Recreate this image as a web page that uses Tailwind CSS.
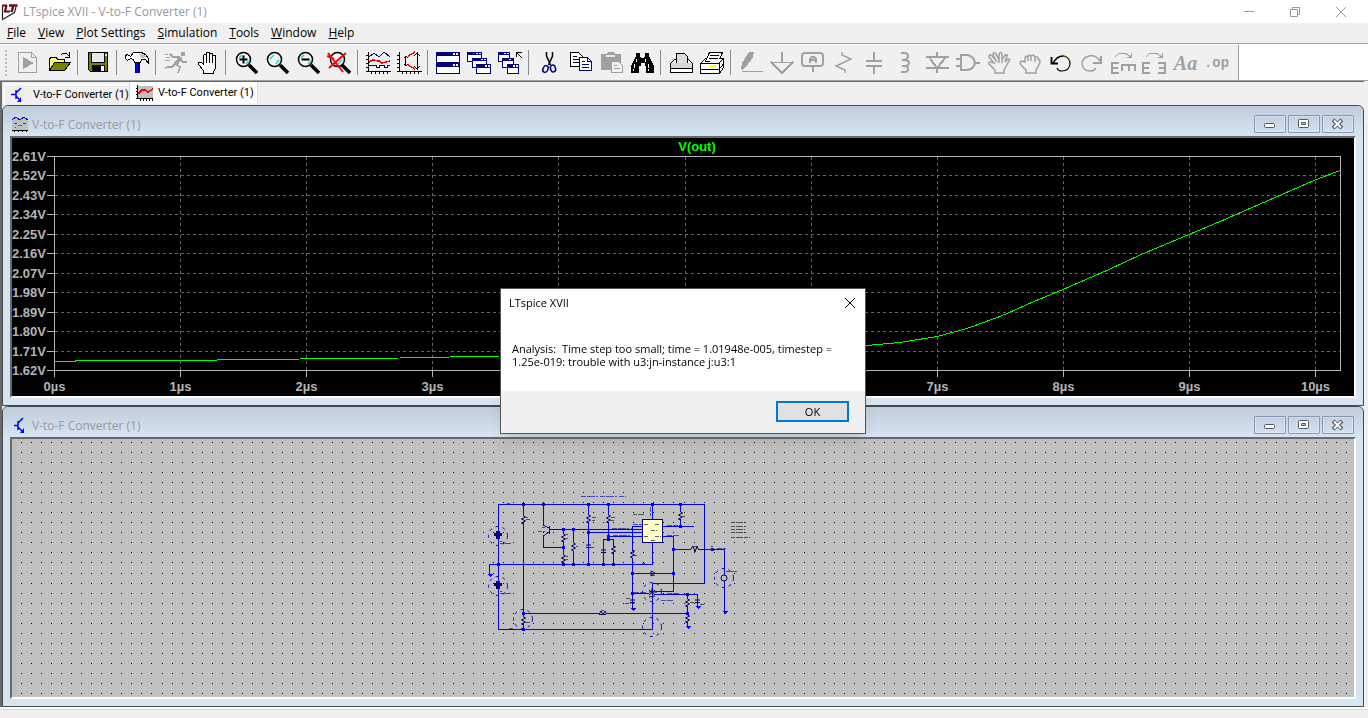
<!DOCTYPE html>
<html lang="en">
  <head>
    <meta charset="UTF-8" />
    <meta name="viewport" content="width=device-width, initial-scale=1.0" />
    <title>LTspice XVII - V-to-F Converter (1)</title>
    <script src="https://cdn.jsdelivr.net/npm/@tailwindcss/browser@4"></script>
  </head>
  <body class="min-h-screen flex flex-col bg-[#f0f0f0] font-['Open_Sans','Noto_Sans',sans-serif] text-xs text-black overflow-hidden">
    <!-- Title bar -->
    <header class="flex items-center h-[23px] bg-white text-[#999]">
      <svg class="w-[18px] h-[18px] ml-[1px]" viewBox="0 0 18 18" fill="none">
        <path d="M1.500 3v13.500L13.500 9.500 15 4" stroke="#222" stroke-width="1.200" />
        <path d="M1 2.500h5M5.500 2L4 8.500h5" stroke="#6b0d14" stroke-width="2.200" />
        <path d="M8 2.500h8.500M12.500 2l-2 7" stroke="#6b0d14" stroke-width="2.500" />
      </svg>
      <h1 class="ml-1">LTspice XVII - V-to-F Converter (1)</h1>
      <div class="ml-auto mr-[4px] flex">
        <button aria-label="Minimize" class="w-[46px] h-[22px] flex items-center justify-center">
          <svg class="w-3 h-3" viewBox="0 0 12 12" stroke="#999"><path d="M1 5.500h10" /></svg>
        </button>
        <button aria-label="Restore" class="w-[46px] h-[22px] flex items-center justify-center">
          <svg class="w-3 h-3" viewBox="0 0 12 12" stroke="#999" fill="none"><path d="M1.500 3.500h7v7h-7zM3.500 3.500v-2h7v7h-2" /></svg>
        </button>
        <button aria-label="Close" class="w-[46px] h-[22px] flex items-center justify-center">
          <svg class="w-3 h-3" viewBox="0 0 12 12" stroke="#999"><path d="M1 1l10 10M11 1L1 11" /></svg>
        </button>
      </div>
    </header>

    <!-- Menu -->
    <nav class="flex items-center h-[21px] pl-[1px] border-b border-[#a0a0a0]">
      <button class="px-[6px]"><u>F</u>ile</button>
      <button class="px-[6px]"><u>V</u>iew</button>
      <button class="px-[6px]"><u>P</u>lot Settings</button>
      <button class="px-[6px]"><u>S</u>imulation</button>
      <button class="px-[6px]"><u>T</u>ools</button>
      <button class="px-[6px]"><u>W</u>indow</button>
      <button class="px-[6px]"><u>H</u>elp</button>
    </nav>

    <!-- Toolbar -->
    <div class="bg-white border-b border-[#a0a0a0] pt-[1px]">
      <div id="toolbar" class="flex items-center w-max h-[35px] bg-[#f0f0f0] pl-[5px] pr-[6px] border-r border-[#a0a0a0]">
        <div class="w-[2px] h-[26px] mr-[6px] border-l-2 border-dotted border-[#bbb]"></div>
        <button aria-label="Run" class="w-[31px] h-[30px] flex items-center justify-center">
          <svg class="w-[25px] h-6" viewBox="0 0 25 24" fill="none" stroke="#a0a0a0" shape-rendering="crispEdges"><path d="M2.500 1.500h13l5 5v15h-18zM15.500 1.500v5h5" /><path d="M7 6v12l11-6z" fill="#a0a0a0" stroke="none" /></svg>
        </button>
        <button aria-label="Open" class="w-[31px] h-[30px] flex items-center justify-center">
          <svg class="w-[25px] h-6" viewBox="0 0 25 24" fill="none" stroke="#000" shape-rendering="crispEdges"><path d="M2.500 19V8l2-2h4l2 2h7v4" fill="#ffff80" /><path d="M2.500 19.500l5-8h16l-6 8z" fill="#808000" /><path d="M14 4l2-2h3l3 3M22.500 1v5h-5" /></svg>
        </button>
        <div class="w-2 h-[25px] pl-[2px]"><div class="w-px h-full bg-[#8c8c8c]"></div></div>
        <button aria-label="Save" class="w-[31px] h-[30px] flex items-center justify-center">
          <svg class="w-[25px] h-6" viewBox="0 0 25 24" shape-rendering="crispEdges"><path d="M2 1h20v20H4l-2-2z" fill="#000" /><path d="M3 2h18v18H4l-1-1z" fill="#808000" /><path d="M5 1h14v11H5z" fill="#000" /><path d="M6 2h12v9H6z" fill="#e8e8e8" /><path d="M6 14h13v7H6z" fill="#000" /><path d="M15 15h3v5h-3z" fill="#fff" /><path d="M19 3h2v2h-2z" fill="#ddd" /></svg>
        </button>
        <div class="w-2 h-[25px] pl-[2px]"><div class="w-px h-full bg-[#8c8c8c]"></div></div>
        <button aria-label="Control panel" class="w-[31px] h-[30px] flex items-center justify-center">
          <svg class="w-[25px] h-6" viewBox="0 0 25 24" shape-rendering="crispEdges"><path d="M10 9h5v13h-5z" fill="#000080" /><path d="M11 10h2v12h-2z" fill="#0000ff" /><path d="M.5 4.500l2-1 3 2 3-4h8l4 2 3 4v5l-3-4h-4l-1 3h-6l-1-3-3-1-3 2-2-2z" fill="#fff" stroke="#000" /><path d="M14 3h4l3 3-5 1z" fill="#c0c0c0" /></svg>
        </button>
        <div class="w-2 h-[25px] pl-[2px]"><div class="w-px h-full bg-[#8c8c8c]"></div></div>
        <button aria-label="Halt" class="w-[31px] h-[30px] flex items-center justify-center">
          <svg class="w-[25px] h-6" viewBox="0 0 25 24" fill="none" stroke="#a0a0a0" stroke-width="2" shape-rendering="crispEdges"><path d="M17 1h4v4h-4z" fill="#a0a0a0" stroke="none" /><path d="M17 6L11 14" stroke-width="4" /><path d="M15 6H9L6 3M16 8l3 3h4M11 13l-3 3H4l-3 1M12 13l4 3-2 6" stroke-width="1.500" /><path d="M1 3.500h3M2 6.500h4M1 9.500h5" stroke-width="1" /></svg>
        </button>
        <button aria-label="Pan" class="w-[31px] h-[30px] flex items-center justify-center">
          <svg class="w-[25px] h-6" viewBox="0 0 25 24" fill="#fff" stroke="#000" shape-rendering="crispEdges"><path d="M8.500 22.500v-3l-5-6v-2h3l2 2V4.500l1-1h2v-2h3v1h3v2h3v13l-2 3v2z" /><path d="M11.500 4v8M14.500 3v9M17.500 4v8" /></svg>
        </button>
        <div class="w-2 h-[25px] pl-[2px]"><div class="w-px h-full bg-[#8c8c8c]"></div></div>
        <button aria-label="Zoom in" class="w-[31px] h-[30px] flex items-center justify-center">
          <svg class="w-[25px] h-6" viewBox="0 0 25 24" fill="none" stroke="#000"><circle cx="9.500" cy="8.500" r="7" fill="#f4f4f4" stroke-width="1.500" /><path d="M5 7l3-3M12 13l3-3" stroke="#00e0e0" stroke-width="1.500" /><path d="M5.500 8.500h8M9.500 4.500v8" stroke-width="2" /><path d="M15 14l8 8" stroke-width="3.500" /></svg>
        </button>
        <button aria-label="Zoom" class="w-[31px] h-[30px] flex items-center justify-center">
          <svg class="w-[25px] h-6" viewBox="0 0 25 24" fill="none" stroke="#000"><circle cx="9.500" cy="8.500" r="7" fill="#f4f4f4" stroke-width="1.500" /><path d="M5 8l4-4M11 13l3-4" stroke="#00e0e0" stroke-width="1.500" /><path d="M15 14l8 8" stroke-width="3.500" /></svg>
        </button>
        <button aria-label="Zoom out" class="w-[31px] h-[30px] flex items-center justify-center">
          <svg class="w-[25px] h-6" viewBox="0 0 25 24" fill="none" stroke="#000"><circle cx="9.500" cy="8.500" r="7" fill="#f4f4f4" stroke-width="1.500" /><path d="M5 7l3-3M12 13l3-3" stroke="#00e0e0" stroke-width="1.500" /><path d="M5.500 8.500h8" stroke-width="2" /><path d="M15 14l8 8" stroke-width="3.500" /></svg>
        </button>
        <button aria-label="Zoom full extents" class="w-[31px] h-[30px] flex items-center justify-center">
          <svg class="w-[25px] h-6" viewBox="0 0 25 24" fill="none" stroke="#000"><circle cx="10.500" cy="8.500" r="7" fill="#f4f4f4" stroke-width="1.500" /><path d="M11 13l4-4" stroke="#00e0e0" stroke-width="1.500" /><path d="M15 14l8 8" stroke-width="3.500" /><path d="M1 2l15 19M19 2L2 17M0 5l7 3" stroke="#f00" stroke-width="2" /></svg>
        </button>
        <div class="w-2 h-[25px] pl-[2px]"><div class="w-px h-full bg-[#8c8c8c]"></div></div>
        <button aria-label="Autorange" class="w-[31px] h-[30px] flex items-center justify-center">
          <svg class="w-[25px] h-6" viewBox="0 0 25 24" fill="none" stroke="#000" shape-rendering="crispEdges"><path d="M2.500 1v20M0 20.500h25M0 4.500h2M0 8.500h2M0 12.500h2M0 16.500h2M5.500 20v3M9.500 20v3M13.500 20v3M17.500 20v3M21.500 20v3" /><path d="M3 6l5-4 5 4 5-5 6 5" stroke="#000080" /><path d="M3 11l4-2 6 1 3 2 4-1 4-1" stroke="#f00" stroke-width="1.500" /><path d="M3 14.500h7v2h3v-2h5v2h3v-2h3" stroke="#000080" /></svg>
        </button>
        <button aria-label="Reset axes" class="w-[31px] h-[30px] flex items-center justify-center">
          <svg class="w-[25px] h-6" viewBox="0 0 25 24" fill="none" stroke="#000" shape-rendering="crispEdges"><path d="M2.500 1v20M0 20.500h25M0 4.500h2M0 8.500h2M0 12.500h2M0 16.500h2M5.500 20v3M9.500 20v3M13.500 20v3M17.500 20v3M21.500 20v3M8.500 5v9M7 7l2-2 2 2M7 13l2 2 2-2M20.500 1v18M17 5l3-3 3 3M17 15l3 3 3-3" /><path d="M18 1l-7 4M11 14l7 4" stroke="#f00" stroke-width="1.500" /></svg>
        </button>
        <div class="w-2 h-[25px] pl-[2px]"><div class="w-px h-full bg-[#8c8c8c]"></div></div>
        <button aria-label="Tile windows" class="w-[31px] h-[30px] flex items-center justify-center">
          <svg class="w-[25px] h-6" viewBox="0 0 25 24" fill="#fff" stroke="#000080" shape-rendering="crispEdges"><path d="M.5 1.500h23v10H.5zM.5 12.500h23v10H.5z" /><path d="M0 1h24v4H0zM0 12h24v4H0z" fill="#000080" stroke="none" /><path d="M17 2h2v2h-2zM20 2h2v2h-2zM17 13h2v2h-2zM20 13h2v2h-2z" stroke="none" /></svg>
        </button>
        <button aria-label="Cascade windows" class="w-[31px] h-[30px] flex items-center justify-center">
          <svg class="w-[25px] h-6" viewBox="0 0 25 24" fill="#fff" stroke="#000080" shape-rendering="crispEdges"><path d="M.5 1.500h14v9H.5z" /><path d="M0 1h15v3H0z" fill="#000080" stroke="none" /><path d="M5.500 7.500h14v9h-14z" /><path d="M5 7h15v3H5z" fill="#000080" stroke="none" /><path d="M9.500 13.500h14v9h-14z" /><path d="M9 13h15v4H9z" fill="#000080" stroke="none" /><path d="M9 2h2v1H9zM12 2h2v1h-2zM14 8h2v1h-2zM17 8h2v1h-2zM18 14h2v2h-2zM21 14h2v2h-2z" stroke="none" /></svg>
        </button>
        <button aria-label="Close all" class="w-[31px] h-[30px] flex items-center justify-center">
          <svg class="w-[25px] h-6" viewBox="0 0 25 24" fill="#fff" stroke="#000080" shape-rendering="crispEdges"><path d="M.5 1.500h11v9H.5z" /><path d="M0 1h12v3H0z" fill="#000080" stroke="none" /><path d="M4.500 7.500h11v9h-11z" /><path d="M4 7h12v3H4z" fill="#000080" stroke="none" /><path d="M9.500 13.500h11v9h-11z" /><path d="M9 13h12v4H9z" fill="#000080" stroke="none" /><path d="M6 2h2v1H6zM9 2h2v1H9zM11 8h2v1h-2zM15 14h2v2h-2zM18 14h2v2h-2z" stroke="none" /><path d="M18.500 6V1.500H24M19 2l5 5" fill="none" stroke="#000" /></svg>
        </button>
        <div class="w-2 h-[25px] pl-[2px]"><div class="w-px h-full bg-[#8c8c8c]"></div></div>
        <button aria-label="Cut" class="w-[31px] h-[30px] flex items-center justify-center">
          <svg class="w-[25px] h-6" viewBox="0 0 25 24" fill="none" stroke="#000"><path d="M9.500 1v4l4 9M15.500 1v4l-4 9" stroke-width="1.500" /><g stroke="#000080" stroke-width="1.500"><ellipse cx="8.500" cy="18" rx="2.500" ry="3.500" transform="rotate(25 8.500 18)" /><ellipse cx="16" cy="17.500" rx="2.500" ry="3.500" transform="rotate(-15 16 17.500)" /></g></svg>
        </button>
        <button aria-label="Copy" class="w-[31px] h-[30px] flex items-center justify-center">
          <svg class="w-[25px] h-6" viewBox="0 0 25 24" fill="#fff" stroke="#000" shape-rendering="crispEdges"><path d="M2.500 1.500h8l4 4v10h-12zM5 5.500h4M5 8.500h7M5 11.500h7" /><path d="M11.500 6.500h8l4 4v9h-12zM19.500 6.500v4h4M14 10.500h3M14 13.500h7M14 16.500h7" stroke="#000080" /></svg>
        </button>
        <button aria-label="Paste" class="w-[31px] h-[30px] flex items-center justify-center">
          <svg class="w-[25px] h-6" viewBox="0 0 25 24" fill="#a0a0a0" shape-rendering="crispEdges"><path d="M2 3h5l2-2h5l2 2h6v16H2z" /><path d="M7 4h9v2H7z" fill="#e8e8e8" /><path d="M12.500 10.500h7l4 4v7h-11zM15 14.500h3M15 17.500h6" fill="#f0f0f0" stroke="#a0a0a0" /></svg>
        </button>
        <button aria-label="Find" class="w-[31px] h-[30px] flex items-center justify-center">
          <svg class="w-[25px] h-6" viewBox="0 0 25 24" shape-rendering="crispEdges"><path d="M6 2h4v3l1 2h3l1-2V2h4v3l2 4 3 6v7h-8v-7h-1v-3h-4v3H9v7H1v-7l3-6 2-4z" fill="#000" /><path d="M6 8h1v3H6zM15 8h1v3h-1zM4 13h1v4H4zM18 13h1v4h-1zM3 18h1v2H3zM18 18h1v2h-1z" fill="#fff" /></svg>
        </button>
        <div class="w-2 h-[25px] pl-[2px]"><div class="w-px h-full bg-[#8c8c8c]"></div></div>
        <button aria-label="Print" class="w-[31px] h-[30px] flex items-center justify-center">
          <svg class="w-[25px] h-6" viewBox="0 0 25 24" fill="#fff" stroke="#000" shape-rendering="crispEdges"><path d="M1.500 12.500l4-4h14l4 4v9h-22z" /><path d="M7.500 12V2.500h8l3 3V12" fill="#ddd" /><path d="M2 12h21v5H2z" fill="#d8d8d8" stroke="none" /><path d="M2 17.500h21" /></svg>
        </button>
        <button aria-label="Print setup" class="w-[31px] h-[30px] flex items-center justify-center">
          <svg class="w-[25px] h-6" viewBox="0 0 25 24" fill="#fff" stroke="#000" shape-rendering="crispEdges"><path d="M.5 12.500l5-5h18v9l-4 6H.500z" /><path d="M5.500 10.500l4-9h13l-4 9zM10 4.500h9M9 7.500h9" /><path d="M1 12.500h18l4-5M19.500 12v10M1 18.500h18l4-5" /><path d="M10 14h6v2h-6z" fill="#ff0" stroke="none" /></svg>
        </button>
        <div class="w-2 h-[25px] pl-[2px]"><div class="w-px h-full bg-[#8c8c8c]"></div></div>
        <button aria-label="Wire" class="w-[31px] h-[30px] flex items-center justify-center">
          <svg class="w-[25px] h-6" viewBox="0 0 25 24" fill="#a0a0a0" shape-rendering="crispEdges"><path d="M10 1h5l-1 5-7 10-4 3-1-1 1-6z" /><path d="M3 20h21v1H3z" /></svg>
        </button>
        <button aria-label="Ground" class="w-[31px] h-[30px] flex items-center justify-center">
          <svg class="w-[25px] h-6" viewBox="0 0 25 24" fill="none" stroke="#a0a0a0" stroke-width="2" shape-rendering="crispEdges"><path d="M12 1v10" /><path d="M0 11.500h24M1 11l11 11 11-11" stroke-width="1.500" /></svg>
        </button>
        <button aria-label="Label net" class="w-[31px] h-[30px] flex items-center justify-center">
          <svg class="w-[25px] h-6" viewBox="0 0 25 24" fill="none" stroke="#a0a0a0" stroke-width="2"><rect x="1" y="2" width="21" height="13" rx="3" /><path d="M12 15v6M9 12V8l2-2h2l2 2v4M9 9h6" /></svg>
        </button>
        <button aria-label="Resistor" class="w-[31px] h-[30px] flex items-center justify-center">
          <svg class="w-[25px] h-6" viewBox="0 0 25 24" fill="none" stroke="#a0a0a0" stroke-width="1.500"><path d="M10 1v3l9 4L4 15l9 4v3" /></svg>
        </button>
        <button aria-label="Capacitor" class="w-[31px] h-[30px] flex items-center justify-center">
          <svg class="w-[25px] h-6" viewBox="0 0 25 24" fill="none" stroke="#a0a0a0" stroke-width="2" shape-rendering="crispEdges"><path d="M11 1v8M11 15v8" /><path d="M3 10h16M3 15h16" stroke-width="2" /></svg>
        </button>
        <button aria-label="Inductor" class="w-[31px] h-[30px] flex items-center justify-center">
          <svg class="w-[25px] h-6" viewBox="0 0 25 24" fill="none" stroke="#a0a0a0" stroke-width="2"><path d="M7 2h3q4 0 4 3t-4 4H8M10 9q5 0 5 3t-5 3H8M10 15q4 0 4 3t-4 3H7" /></svg>
        </button>
        <button aria-label="Diode" class="w-[31px] h-[30px] flex items-center justify-center">
          <svg class="w-[25px] h-6" viewBox="0 0 25 24" fill="none" stroke="#a0a0a0" stroke-width="2" shape-rendering="crispEdges"><path d="M12 1v5M12 17v5M1 6h23M1 17h23" /><path d="M4 6l8 11 9-11" /></svg>
        </button>
        <button aria-label="Component" class="w-[31px] h-[30px] flex items-center justify-center">
          <svg class="w-[25px] h-6" viewBox="0 0 25 24" fill="none" stroke="#a0a0a0" stroke-width="2"><path d="M5 4h6q7 1 8 8-1 6-8 7H5zM0 8h5M0 15h5M19 12h5" /></svg>
        </button>
        <button aria-label="Move" class="w-[31px] h-[30px] flex items-center justify-center">
          <svg class="w-[25px] h-6" viewBox="0 0 25 24" fill="none" stroke="#a0a0a0" stroke-width="1.500"><path d="M8 22v-3l-6-6q-1-2 1-2l4 1-5-6q0-3 2-2l4 4-2-5q1-3 3 0l3 6V3q2-3 3 0v6l3-5q3-1 2 1l-2 6 3-3q3 0 1 2l-5 9v3zM8 8l2 3M12 9v3M15 9v3" /></svg>
        </button>
        <button aria-label="Drag" class="w-[31px] h-[30px] flex items-center justify-center">
          <svg class="w-[25px] h-6" viewBox="0 0 25 24" fill="none" stroke="#a0a0a0" stroke-width="1.500"><path d="M8 22v-3l-5-5q-2-4 1-4l3 1V7q1-3 3-1 1-3 3-1 3-2 4 1 3-1 3 2 2 0 2 3l-2 5-2 3v3zM10 6v4M13 5v5M17 7v4" /></svg>
        </button>
        <button aria-label="Undo" class="w-[31px] h-[30px] flex items-center justify-center">
          <svg class="w-[25px] h-6" viewBox="0 0 25 24" fill="none" stroke="#000"><path d="M4 12q4-7 10-7" stroke-width="1.500" /><path d="M14 5q7 1 7 8-1 7-8 7-4 0-5-3" stroke-width="1.200" /><path d="M13 4q6 1 8 6" stroke="#606000" /><path d="M2.500 6v6.500H9" stroke-width="1.800" /></svg>
        </button>
        <button aria-label="Redo" class="w-[31px] h-[30px] flex items-center justify-center">
          <svg class="w-[25px] h-6" viewBox="0 0 25 24" fill="none" stroke="#a0a0a0" stroke-width="1.500"><path d="M21 11Q15 3 9 5q-7 2-7 8 1 7 8 7 4 0 6-3" /><path d="M21 5v7h-8" stroke-width="2" /></svg>
        </button>
        <button aria-label="Rotate" class="w-[31px] h-[30px] flex items-center justify-center">
          <svg class="w-[25px] h-6" viewBox="0 0 25 24" fill="none" stroke="#a0a0a0" stroke-width="2" shape-rendering="crispEdges"><path d="M8 12H1v10h7M1 17h6M11 20v-6h13v6M18 14v6" /><path d="M4 6l4-4h6l6 4M20.500 2v4.500h-5" stroke-width="1" /></svg>
        </button>
        <button aria-label="Mirror" class="w-[31px] h-[30px] flex items-center justify-center">
          <svg class="w-[25px] h-6" viewBox="0 0 25 24" fill="none" stroke="#a0a0a0" stroke-width="2" shape-rendering="crispEdges"><path d="M8 12H1v10h7M1 17h6M16 12h7v10h-7M23 17h-6" /><path d="M4 6l4-4h6l6 4M20.500 2v4.500h-5" stroke-width="1" /></svg>
        </button>
        <button class="w-[31px] h-[30px] font-['Liberation_Serif',serif] font-bold italic text-xl text-[#a0a0a0] leading-none">Aa</button>
        <button class="w-[31px] h-[30px] font-['Liberation_Mono',monospace] font-bold text-sm text-[#a0a0a0] leading-none">.op</button>
      </div>
    </div>

    <main class="flex-1 flex flex-col border-l-2 border-t border-[#696969] mr-1">
      <!-- Document tabs -->
      <div class="flex items-end h-[23px] pl-[2px] font-[Roboto,'Open_Sans',sans-serif] text-[11px]" role="tablist">
        <button role="tab" class="flex items-center h-[21px] w-[125px] pl-[5px] gap-[5px] border-l border-t border-white whitespace-nowrap">
          <svg class="w-[18px] h-[18px] shrink-0" viewBox="0 0 18 18" fill="none" stroke="#00f" stroke-width="1.500"><path d="M1 8.500h5M6 4v9M6 7l5-5M6 10l5 5" /><path d="M11 11v5H7z" fill="#00f" stroke="none" /></svg>
          V-to-F Converter (1)
        </button>
        <button role="tab" aria-selected="true" class="flex items-center h-[22px] w-[129px] mb-[1px] pl-[6px] gap-[5px] bg-white border-x border-[#dcdcdc] whitespace-nowrap">
          <svg class="w-[17px] h-[17px] shrink-0" viewBox="0 0 17 17" fill="none" shape-rendering="crispEdges"><path d="M2 1h15v13H2z" fill="#c0c0c0" /><path d="M1.500 0v14M0 13.500h17M0 3.500h2M0 6.500h2M0 9.500h2M4.500 13v3M7.500 13v3M10.500 13v3M13.500 13v3M16.500 13v3" stroke="#000" /><path d="M2 9l4-4h3l3 2 5-3" stroke="#f00" stroke-width="1.500" /></svg>
          V-to-F Converter (1)
        </button>
      </div>

      <!-- Waveform window -->
      <section class="border border-[#45484d] rounded-t-md bg-[#d7e4f2] px-[7px] pb-[7px]">
        <div class="flex items-center h-[30px] -mx-[7px] px-[9px] pt-[6px] rounded-t-md bg-linear-to-b from-[#bfcddb] to-[#d7e4f2] text-[#999]">
          <svg class="w-[16px] h-[16px]" viewBox="0 0 16 16" fill="none" shape-rendering="crispEdges"><path d="M0 4l4-3 4 3 4-3 4 3v11H0z" fill="#c0c0c0" /><path d="M0 4l4-3 4 3 4-3 4 3" stroke="#00f" /><path d="M2 7.500h3M11 7.500h3M6 9.500h1M8 9.500h2M3 11.500h1" stroke="#f00" /><path d="M0 14.500h16M2.500 14v2M6.500 14v2M10.500 14v2M14.500 14v2" stroke="#000" /></svg>
          <h2 class="ml-1 pt-[2px]">V-to-F Converter (1)</h2>
          <div class="ml-auto flex gap-[2px]">
            <button aria-label="Minimize" class="w-8 h-[18px] flex items-center justify-center rounded-[1px] border border-[#8797b3] bg-linear-to-b from-[#c3d1e0] to-[#d3e0ee] ring-inset ring-1 ring-white/30"><svg class="w-3 h-3" viewBox="0 0 12 12"><rect x=".5" y="5.500" width="10" height="4" rx="1" fill="#fff" stroke="#535666" /></svg></button>
            <button aria-label="Restore" class="w-8 h-[18px] flex items-center justify-center rounded-[1px] border border-[#8797b3] bg-linear-to-b from-[#c3d1e0] to-[#d3e0ee] ring-inset ring-1 ring-white/30"><svg class="w-3 h-3" viewBox="0 0 12 12" fill="#fff" stroke="#535666"><rect x=".5" y="1.500" width="10" height="8" rx="1" /><path d="M3.500 4.500h4v2h-4z" fill="#bccbdc" /></svg></button>
            <button aria-label="Close" class="w-8 h-[18px] flex items-center justify-center rounded-[1px] border border-[#8797b3] bg-linear-to-b from-[#c3d1e0] to-[#d3e0ee] ring-inset ring-1 ring-white/30"><svg class="w-3 h-3" viewBox="0 0 12 12" fill="none"><path d="M1 2l9 8M10 2l-9 8" stroke="#535666" stroke-width="4" /><path d="M2 2.500l7 7M9 2.500l-7 7" stroke="#fff" stroke-width="2" /></svg></button>
          </div>
        </div>
        <div class="border-2 border-t-[#696969] border-l-[#696969] border-b-white border-r-white">
          <svg class="block w-full h-auto bg-black font-['Liberation_Sans',sans-serif] font-bold text-[13px]" viewBox="12 138 1342 258" fill="none">
            <g id="plot-grid" stroke="#646464" stroke-dasharray="3 3" shape-rendering="crispEdges"></g>
            <g id="plot-ticks" stroke="#b4b4b4" shape-rendering="crispEdges"><path d="M54.500 156.500h1286v214h-1286z" /></g>
            <g id="plot-labels" fill="#b4b4b4"></g>
            <text x="697" y="151" text-anchor="middle" fill="#0f0">V(out)</text>
            <path d="M54 361.500h21v-1l142-.5 83-1 100-1 100-2 180-4.500 160-5 27-1 33-3 37-6 30-8 33-12 34-15 29-12 47-20.500 30-14 49-20.500 31-13 16-7 39-17 40-17.500 25-9.500" stroke="#0f0" shape-rendering="crispEdges" />
          </svg>
        </div>
      </section>

      <!-- Schematic window -->
      <section class="border border-[#45484d] rounded-t-md bg-[#d7e4f2] px-[7px] pb-[7px]">
        <div class="flex items-center h-[30px] -mx-[7px] px-[9px] pt-[6px] rounded-t-md bg-linear-to-b from-[#bfcddb] to-[#d7e4f2] text-[#999]">
          <svg class="w-[16px] h-[16px]" viewBox="0 0 16 16" fill="none" stroke="#00f" stroke-width="1.500"><path d="M2 8.500h4M6 4v9M6 6l5-5M6 10l5 5" /><path d="M12 11v5H8z" fill="#00f" stroke="none" /></svg>
          <h2 class="ml-1 pt-[2px]">V-to-F Converter (1)</h2>
          <div class="ml-auto flex gap-[2px]">
            <button aria-label="Minimize" class="w-8 h-[18px] flex items-center justify-center rounded-[1px] border border-[#8797b3] bg-linear-to-b from-[#c3d1e0] to-[#d3e0ee] ring-inset ring-1 ring-white/30"><svg class="w-3 h-3" viewBox="0 0 12 12"><rect x=".5" y="5.500" width="10" height="4" rx="1" fill="#fff" stroke="#535666" /></svg></button>
            <button aria-label="Restore" class="w-8 h-[18px] flex items-center justify-center rounded-[1px] border border-[#8797b3] bg-linear-to-b from-[#c3d1e0] to-[#d3e0ee] ring-inset ring-1 ring-white/30"><svg class="w-3 h-3" viewBox="0 0 12 12" fill="#fff" stroke="#535666"><rect x=".5" y="1.500" width="10" height="8" rx="1" /><path d="M3.500 4.500h4v2h-4z" fill="#bccbdc" /></svg></button>
            <button aria-label="Close" class="w-8 h-[18px] flex items-center justify-center rounded-[1px] border border-[#8797b3] bg-linear-to-b from-[#c3d1e0] to-[#d3e0ee] ring-inset ring-1 ring-white/30"><svg class="w-3 h-3" viewBox="0 0 12 12" fill="none"><path d="M1 2l9 8M10 2l-9 8" stroke="#535666" stroke-width="4" /><path d="M2 2.500l7 7M9 2.500l-7 7" stroke="#fff" stroke-width="2" /></svg></button>
          </div>
        </div>
        <div class="border-2 border-t-[#696969] border-l-[#696969] border-b-white border-r-white">
          <svg class="block w-full h-auto bg-[#c0c0c0]" viewBox="12 439 1342 258" fill="none" shape-rendering="crispEdges">
            <path id="dots" fill="#000" />
            <!-- wires -->
            <g stroke="#00f">
              <path d="M498.500 504.500h206v79h-52v46h-154zM489.500 574v-9.500h163V543M523.500 504v12M523.500 523v94M523.500 623v6M523.500 613.500h76M606 613.500h81" />
              <path d="M543.500 504v21l5 3M549.500 526v8M549 532l-5.500 4v11.500h20M549 529.500h93" />
              <path d="M563.500 529v5M563.500 541v14M563.500 562v2M573.500 529v14M573.500 551v13" />
              <path d="M588.500 504v11M588.500 522v42M588 532.500h54M608.500 504v11M608.500 522v17M608 536.500h34M603.500 564v-24.500h10v7M613.500 553v11" />
              <path d="M642 526.500h-9.500v24M632.500 558v50M652.500 504v15M680.500 504v8M680.500 519v7.500M662 526.500h32" />
              <path d="M662 536.500h11.500v55H655M673 549.500h18M698 549.500h26.500v25M724.500 581v30M632 573.500h42M632 593.500h17M655 594.500h42.500v12M687.500 594v5M687.500 606v9M687.500 622v4" />
              <rect x="642.500" y="519.500" width="20" height="23" fill="#ffffc8" stroke="#000080" />
            </g>
            <!-- junctions -->
            <path id="junctions" fill="#00f" />
            <!-- grounds -->
            <path d="M487 574h6l-3 3zM630 608h6l-3 3zM722 611h6l-3 3zM695 606h6l-3 3zM685 626h6l-3 3z" fill="#00f" />
            <!-- resistors, capacitors, diodes -->
            <path id="resistors" stroke="#000060" shape-rendering="auto" />
            <path d="M600 613l1-2 2 4 2-4 1 2M599 614.500h7M691 549l2-3 2 6 2-6 1 3M586 545h5M586 547.500h5M601 550h5M601 552.500h5M630 600h5M630 602.500h5M695 600h5M695 602.500h5M651 571v5l4-3zM649 590l6 5M649 595l6-5M649 592h8M649 597l6-1M652 588v4" stroke="#000060" shape-rendering="auto" />
            <path d="M494 533h8v3h-8zM496 531h4v8h-4zM494 583h8v3h-8zM496 581h4v8h-4z" fill="#000080" />
            <circle cx="724" cy="578" r="3" stroke="#000060" shape-rendering="auto" />
            <g stroke="#0000c0" stroke-dasharray="3 4" shape-rendering="auto">
              <circle cx="498" cy="536" r="9.500" /><circle cx="498" cy="586" r="9.500" />
              <circle cx="523" cy="619" r="9.500" /><circle cx="652" cy="592" r="9.500" />
              <circle cx="652" cy="627" r="9.500" /><circle cx="724" cy="578" r="9.500" />
            </g>
            <!-- annotations, too small to read at this zoom -->
            <g stroke="#2020c0" stroke-opacity=".75" stroke-dasharray="5 1 8 1 2 2">
              <path d="M581 496.500h45M612 528.500h20M613 535.500h18M633 524.500h9M667 525.500h11M667 535.500h12M634 592.500h12M667 593.500h12M661 600.500h12M717 548.500h9M650.500 507v9" />
            </g>
            <g stroke="#202020" stroke-opacity=".7" stroke-dasharray="4 1 7 1">
              <path d="M507 503.500h3M509 628.500h4M526 517.500h2M526 519.500h4M500 541.500h2M500 543.500h11M500 591.500h2M500 593.500h11M538 531.500h7M542 527.500h3M566 534.500h2M566 538.500h2M566 556.500h2M566 559.500h2M592 517.500h4M592 520.500h3M611 517.500h4M611 520.500h3M633 514.500h11M634 555.500h3M626 598.500h4M625 603.500h6M644 524.500h5M655 524.500h5M651 530.500h6M644 536.500h5M655 536.500h6M651 540.500h5M731 522.500h15M731 526.500h15M731 529.500h14M731 532.500h15M731 537.500h19M726 571.500h11M690 602.500h4M700 604.500h5M683 516.500h2M642 563.500h3M692 546.500h4M711 546.500h2M652 575.500h3M601 610.500h3M526 622.500h4M576 546.500h2M590 547.500h4" />
            </g>
          </svg>
        </div>
      </section>
    </main>

    <!-- Status bar -->
    <footer class="h-[11px] shrink-0 border-t-2 border-white"><div class="border-t border-[#d7d7d7]"></div></footer>

    <!-- Error dialog -->
    <div class="fixed inset-0 flex justify-center items-start pt-[288px] pr-[2px]">
      <div role="dialog" aria-labelledby="dialog-title" class="w-[366px] bg-white border border-[#555] shadow-lg text-[11px]">
        <div class="flex items-center justify-between h-[28px] pl-2 pr-2">
          <h2 id="dialog-title">LTspice XVII</h2>
          <button aria-label="Close" class="p-px"><svg class="w-3 h-3" viewBox="0 0 12 12" stroke="#000"><path d="M1 1l10 10M11 1L1 11" /></svg></button>
        </div>
        <p class="h-[74px] pt-[25px] pl-[11px] pr-4 leading-[13px] whitespace-pre-line">Analysis:&nbsp; Time step too small; time = 1.01948e-005, timestep =
        1.25e-019: trouble with u3:jn-instance j:u3:1</p>
        <div class="flex justify-end h-[42px] bg-[#f0f0f0] pt-[10px] pr-4">
          <button class="w-[73px] h-[21px] bg-[#e1e1e1] border-2 border-[#0078d7] leading-none">OK</button>
        </div>
      </div>
    </div>

    <script>
      const ns = "http://www.w3.org/2000/svg";

      function addLabel(parent, x, y, anchor, text) {
        const el = document.createElementNS(ns, "text");
        el.setAttribute("x", x);
        el.setAttribute("y", y);
        el.setAttribute("text-anchor", anchor);
        el.textContent = text;
        parent.appendChild(el);
      }

      function addPath(parent, d) {
        const el = document.createElementNS(ns, "path");
        el.setAttribute("d", d);
        parent.appendChild(el);
      }

      // Plot axes
      const grid = document.getElementById("plot-grid");
      const ticks = document.getElementById("plot-ticks");
      const labels = document.getElementById("plot-labels");
      const volts = [2.61, 2.52, 2.43, 2.34, 2.25, 2.16, 2.07, 1.98, 1.89, 1.8, 1.71, 1.62];

      volts.forEach((v, i) => {
        const y = Math.round(156 + (i * 214) / 11) + 0.5;
        addPath(ticks, `M47 ${y}h8`);
        if (i > 0 && i < 11) addPath(grid, `M55 ${y}h1285`);
        addLabel(labels, 46, y + 4, "end", v.toFixed(2) + "V");
      });

      for (let i = 0; i <= 10; i++) {
        const x = Math.round(54 + i * 126.1) + 0.5;
        addPath(ticks, `M${x} 371v6`);
        if (i > 0) addPath(grid, `M${x} 157v213`);
        addLabel(labels, x, 391, "middle", i + "µs");
      }

      // Schematic grid dots
      let dots = "";
      for (let r = 0; r < 26; r++) {
        for (let c = 0; c < 133; c++) {
          dots += `M${Math.round(21 + c * 10.038)} ${Math.round(442 + r * 10.04)}h1v1h-1z`;
        }
      }
      document.getElementById("dots").setAttribute("d", dots);

      const junctions = [
        [523, 504], [543, 504], [588, 504], [608, 504], [652, 504], [680, 504],
        [563, 529], [573, 529], [588, 532], [608, 536], [608, 539], [563, 547],
        [498, 564], [563, 564], [573, 564], [588, 564], [603, 564], [613, 564],
        [680, 526], [673, 549], [712, 549], [632, 573], [673, 573], [632, 593],
        [687, 594], [687, 613], [523, 613], [523, 629],
      ];
      document.getElementById("junctions").setAttribute(
        "d",
        junctions.map(([x, y]) => `M${x - 1} ${y - 1}h3v3h-3z`).join("")
      );

      const resistors = [
        [523, 516], [588, 515], [608, 515], [563, 534], [563, 555], [573, 543],
        [613, 546], [632, 550], [680, 512], [687, 599], [687, 615], [523, 617],
      ];
      document.getElementById("resistors").setAttribute(
        "d",
        resistors.map(([x, y]) => `M${x + 0.5} ${y}l2 1-4 2 4 2-4 2 2 1`).join("")
      );
    </script>
  </body>
</html>
